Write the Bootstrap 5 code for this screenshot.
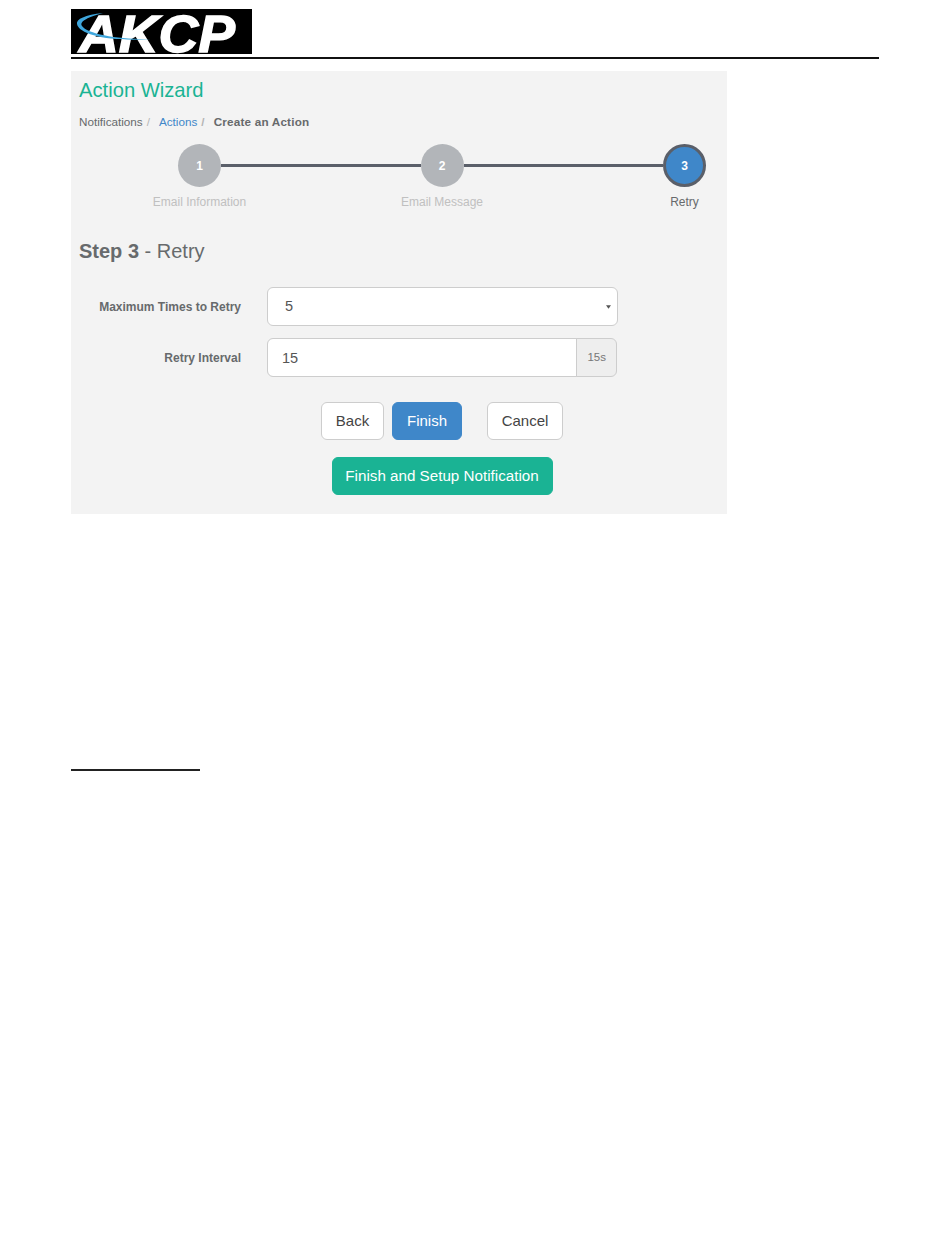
<!DOCTYPE html>
<html lang="en">
<head>
    <meta charset="UTF-8">
    <meta name="viewport" content="width=device-width, initial-scale=1.0">
    <title>Action Wizard</title>
    <link href="https://cdn.jsdelivr.net/npm/bootstrap@5.3.0/dist/css/bootstrap.min.css" rel="stylesheet">
    <style>
        body { font-family: "Liberation Sans", Arial, sans-serif; background: #fff; color: #676a6c; }
        .doc-page { width: 950px; padding: 9px 71px 0; }
        .logo-box { display: block; width: 181px; height: 45px; overflow: visible; }
        .head-rule { height: 2px; background: #111; margin-top: 3px; }
        .wizard-panel { width: 656px; height: 443px; margin-top: 12px; background: #f3f3f3; padding: 7px 8px 0; }
        .wizard-title { font-size: 20.2px; line-height: 24px; font-weight: 400; color: #1ab394; margin: 0; }
        .crumbs { font-size: 11.7px; line-height: 14px; margin: 13px 0 0; }
        .crumbs .breadcrumb-item + .breadcrumb-item { padding-left: 4px; }
        .crumbs .breadcrumb-item + .breadcrumb-item::before { padding-right: 9px; color: #b5b5b5; }
        .crumbs a { color: #3f87c9; text-decoration: none; }
        .crumbs .active { color: #676a6c; font-weight: 700; letter-spacing: .2px; }
        .stepper { margin: 15px 13px 0 99px; }
        .step-item { width: 43px; }
        .step-dot { width: 43px; height: 43px; border-radius: 50%; background: #b2b5b9; color: #fff; font-size: 12px; font-weight: 700; }
        .step-dot.current { background: #3f87c9; border: 3px solid #5a5f69; }
        .step-line { height: 3px; background: #5a5f69; margin-top: 20px; }
        .step-label { font-size: 12px; line-height: 14px; margin-top: 8px; color: #c0c0c0; white-space: nowrap; }
        .step-label.current { color: #676a6c; }
        .step-heading { font-size: 20px; line-height: 24px; font-weight: 400; margin: 30px 0 0; }
        .form-area { margin-top: 24px; }
        .field-label { width: 162px; margin: 0 26px 0 0; text-align: right; font-size: 12px; font-weight: 700; }
        .field-box { width: 350px; }
        .field-box .form-control, .field-box .form-select, .field-box .input-group-text { height: 39px; font-size: 14.5px; color: #555; border-color: #cdcdcd; }
        .field-box .form-select { width: 351px; padding-left: 17px; background-size: 5px 4px; background-position: right 6px center; background-image: url("data:image/svg+xml,%3Csvg xmlns='http://www.w3.org/2000/svg' viewBox='0 0 6 4'%3E%3Cpath d='M0 0h6L3 4z' fill='%23555'/%3E%3C/svg%3E"); }
        .field-box .form-control { padding-left: 14px; }
        .field-box .input-group-text { font-size: 11.5px; padding: 0 10px; background: #eee; color: #777; }
        .second-field { margin-top: 12px; }
        .wizard-actions { width: 350px; margin: 25px 0 0 188px; }
        .wizard-btn { height: 38px; font-size: 15px; padding: 0; border-color: #cdcdcd; background: #fff; color: #444; }
        .wizard-btn.back-btn { width: 63px; }
        .wizard-btn.cancel-btn { width: 76px; }
        .wizard-btn.finish-btn { width: 70px; background: #3f87c9; border-color: #3f87c9; color: #fff; margin-left: 8px; margin-right: 25px; }
        .wizard-btn.setup-btn { width: 221px; font-size: 15.2px; background: #1ab394; border-color: #1ab394; color: #fff; }
        .setup-row { margin-top: 17px; }
        .section-rule { width: 129px; height: 2px; background: #222; margin-top: 255px; }
    </style>
</head>
<body>
    <div class="doc-page">
        <!-- Logo -->
        <svg class="logo-box" viewBox="0 0 181 45" role="img" aria-label="AKCP">
            <rect width="181" height="45" fill="#000"/>
            <text x="8" y="43" fill="#fff" stroke="#fff" stroke-width="1.4" font-family="Liberation Sans, Arial, sans-serif" font-size="52" font-weight="700" font-style="italic" textLength="156" lengthAdjust="spacingAndGlyphs">AKCP</text>
            <path d="M32 4C14 6 5 10 6 15C8 26 40 33 80 30C50 31 16 25 11 17C8 12 18 8 32 4Z" fill="#3fa6dc"/>
        </svg>
        <div class="head-rule"></div>

        <div class="wizard-panel">
            <h2 class="wizard-title">Action Wizard</h2>
            <ol class="breadcrumb crumbs">
                <li class="breadcrumb-item">Notifications</li>
                <li class="breadcrumb-item"><a href="#">Actions</a></li>
                <li class="breadcrumb-item active">Create an Action</li>
            </ol>

            <!-- Pasos -->
            <div class="stepper d-flex align-items-start">
                <div class="step-item d-flex flex-column align-items-center">
                    <div class="step-dot d-flex align-items-center justify-content-center">1</div>
                    <div class="step-label">Email Information</div>
                </div>
                <div class="step-line flex-grow-1"></div>
                <div class="step-item d-flex flex-column align-items-center">
                    <div class="step-dot d-flex align-items-center justify-content-center">2</div>
                    <div class="step-label">Email Message</div>
                </div>
                <div class="step-line flex-grow-1"></div>
                <div class="step-item d-flex flex-column align-items-center">
                    <div class="step-dot current d-flex align-items-center justify-content-center">3</div>
                    <div class="step-label current">Retry</div>
                </div>
            </div>

            <h3 class="step-heading"><strong>Step 3</strong> - Retry</h3>

            <form class="form-area">
                <div class="d-flex align-items-center">
                    <label class="field-label" for="maxRetry">Maximum Times to Retry</label>
                    <div class="field-box">
                        <select class="form-select" id="maxRetry">
                            <option>5</option>
                        </select>
                    </div>
                </div>
                <div class="d-flex align-items-center second-field">
                    <label class="field-label" for="retryInterval">Retry Interval</label>
                    <div class="field-box input-group">
                        <input type="text" class="form-control" id="retryInterval" value="15">
                        <span class="input-group-text">15s</span>
                    </div>
                </div>
                <div class="wizard-actions">
                    <div class="d-flex justify-content-center">
                        <button type="button" class="btn wizard-btn back-btn">Back</button>
                        <button type="button" class="btn wizard-btn finish-btn">Finish</button>
                        <button type="button" class="btn wizard-btn cancel-btn">Cancel</button>
                    </div>
                    <div class="d-flex justify-content-center setup-row">
                        <button type="button" class="btn wizard-btn setup-btn">Finish and Setup Notification</button>
                    </div>
                </div>
            </form>
        </div>

        <div class="section-rule"></div>
    </div>
    <script src="https://cdn.jsdelivr.net/npm/bootstrap@5.3.0/dist/js/bootstrap.bundle.min.js"></script>
</body>
</html>
